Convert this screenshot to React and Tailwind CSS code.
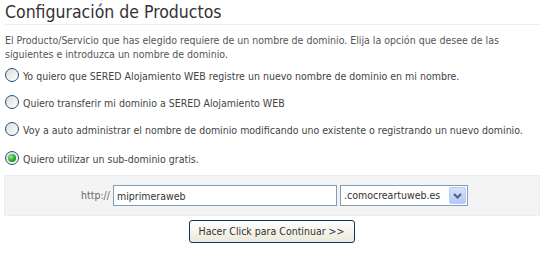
import { useState } from "react";

const opciones = [
  "Yo quiero que SERED Alojamiento WEB registre un nuevo nombre de dominio en mi nombre.",
  "Quiero transferir mi dominio a SERED Alojamiento WEB",
  "Voy a auto administrar el nombre de dominio modificando uno existente o registrando un nuevo dominio.",
  "Quiero utilizar un sub-dominio gratis.",
];

function Radio({ checked, onClick }) {
  return (
    <span
      onClick={onClick}
      className="flex h-[14px] w-[14px] shrink-0 cursor-pointer items-center justify-center rounded-full border border-[#1c5180] bg-gradient-to-br from-[#dcdcd7] to-white"
    >
      {checked && (
        <span className="h-[8px] w-[8px] rounded-full bg-[radial-gradient(circle_at_35%_35%,#8ef08e,#21a121_60%,#137813)]" />
      )}
    </span>
  );
}

export default function App() {
  const [selected, setSelected] = useState(3);
  const [sub, setSub] = useState("miprimeraweb");

  return (
    <div className="h-[258px] w-[547px] bg-white pl-[5px] pr-[7px] font-['DejaVu_Sans_Condensed','Liberation_Sans',sans-serif] text-[10.5px] text-[#444]">
      <h1 className="border-b border-[#eeeeee] pt-[2px] pb-[2px] text-[17.5px] leading-[20px] text-[#333]">
        Configuración de Productos
      </h1>

      <p className="mt-[8px] leading-[14px] text-[#555]">
        El Producto/Servicio que has elegido requiere de un nombre de dominio. Elija la opción que desee de las siguientes e introduzca un nombre de dominio.
      </p>

      <div className="mt-[6px] flex flex-col">
        {opciones.map((texto, i) => (
          <label
            key={i}
            className={`flex h-[15px] items-center gap-[4px] whitespace-nowrap text-[#444] ${i === 3 ? "mt-[14px]" : i > 0 ? "mt-[12px]" : ""}`}
          >
            <Radio checked={selected === i} onClick={() => setSelected(i)} />
            <span className="pt-[3px] leading-[15px]">{texto}</span>
          </label>
        ))}
      </div>

      <div className="mt-[10px] -ml-[1px] flex h-[41px] items-center border border-[#ececec] bg-[#f3f3f3]">
        <span className="w-[108px] pr-[3px] text-right text-[#666]">http://</span>
        <input
          value={sub}
          onChange={(e) => setSub(e.target.value)}
          className="h-[21px] w-[224px] border border-[#7f9db9] bg-white px-[3px] text-[10.5px] text-[#333] outline-none"
        />
        <div className="ml-[3px] flex h-[21px] w-[128px] items-center justify-between border border-[#7f9db9] bg-white pl-[3px] pr-[1px] text-[#333]">
          <span>.comocreartuweb.es</span>
          <span className="flex h-[17px] w-[17px] items-center justify-center rounded-[2px] border border-[#b9c9ef] bg-gradient-to-b from-[#d6e1fb] to-[#b4c8f6]">
            <svg width="9" height="6" viewBox="0 0 9 6">
              <path d="M1 1 L4.5 4.5 L8 1" fill="none" stroke="#4d6185" strokeWidth="2" />
            </svg>
          </span>
        </div>
      </div>

      <div className="mt-[4px] flex justify-center pr-[2px]">
        <button className="h-[23px] w-[166px] rounded-[3px] border border-[#003c74] bg-gradient-to-b from-white to-[#ece9d8] text-[10.5px] text-[#333]">
          Hacer Click para Continuar &gt;&gt;
        </button>
      </div>
    </div>
  );
}
